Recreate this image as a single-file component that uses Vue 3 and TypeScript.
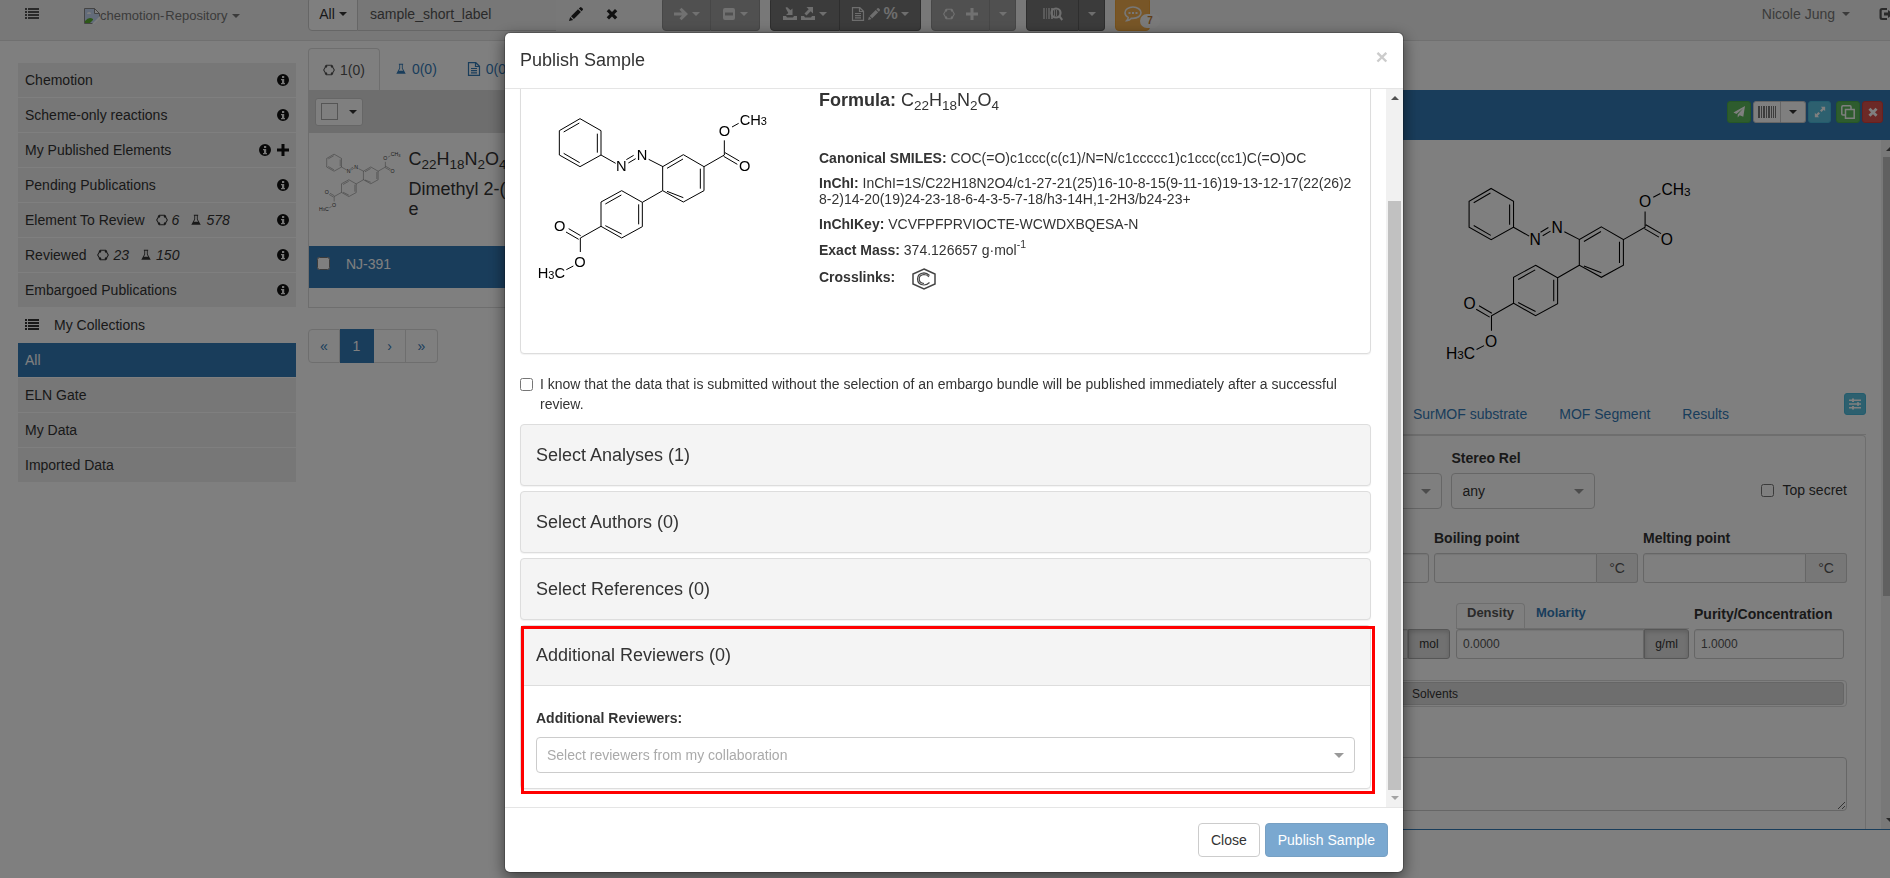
<script setup lang="ts">
import { ref } from 'vue'

interface Collection {
  name: string
  molecules?: number
  reactions?: number
  add?: boolean
}

const published: Collection[] = [
  { name: 'Chemotion' },
  { name: 'Scheme-only reactions' },
  { name: 'My Published Elements', add: true },
  { name: 'Pending Publications' },
  { name: 'Element To Review', molecules: 6, reactions: 578 },
  { name: 'Reviewed', molecules: 23, reactions: 150 },
  { name: 'Embargoed Publications' },
]
const collections: string[] = ['All', 'ELN Gate', 'My Data', 'Imported Data']
const activeCollection = ref('All')
const sections: string[] = ['Select Analyses (1)', 'Select Authors (0)', 'Select References (0)']
const segments: string[] = ['SurMOF substrate', 'MOF Segment', 'Results']
const embargoAccepted = ref(false)
const topSecret = ref(false)
const rowChecked = ref(false)
</script>

<template>
  <svg class="defs" aria-hidden="true">
    <symbol id="i-list" viewBox="0 0 14 14"><path d="M0 1h2v2H0zM3 1h11v2H3zM0 4h2v2H0zM3 4h11v2H3zM0 7h2v2H0zM3 7h11v2H3zM0 10h2v2H0zM3 10h11v2H3z" /></symbol>
    <symbol id="i-info" viewBox="0 0 14 14"><path fill-rule="evenodd" d="M7 1a6 6 0 1 0 0 12A6 6 0 0 0 7 1zM6 3h2.2v2H6zM5 6h3.2v4H9v1.3H5V10h1V7.3H5z" /></symbol>
    <symbol id="i-plus" viewBox="0 0 14 14"><path d="M5.5 1h3v4.5H13v3H8.5V13h-3V8.5H1v-3h4.5z" /></symbol>
    <symbol id="i-hex" viewBox="0 0 14 14"><path fill="none" stroke="currentColor" stroke-width="1.2" d="M4 1.5h6L13.2 7 10 12.500H4L.8 7z" /><path fill="none" stroke="currentColor" stroke-width="2.4" d="M2.800 3.800 4.300 2M11.200 3.800 9.700 2M2.800 10.200l1.500 1.800M11.200 10.200 9.700 12" /></symbol>
    <symbol id="i-flask" viewBox="0 0 14 14"><path fill-rule="evenodd" d="M4.500 1h5v1H9v4l3.500 6.500h-11L5 6V2h-.5zM6 2v4.300L4.500 9h5L8 6.300V2z" /></symbol>
    <symbol id="i-doc" viewBox="0 0 14 14"><path fill="none" stroke="currentColor" stroke-width="1.200" d="M1.500.7h7.300l3.700 3.600v9h-11zM8.500.8v3.700h4M4 6.500h6M4 8.700h6M4 10.900h6" /></symbol>
    <symbol id="i-pencil" viewBox="0 0 14 14"><path d="M0 14l1.200-4 2.900 2.900zM2 9.200 9 2.200l2.900 2.900-7 7zM9.800 1.500 11 .4q.8-.6 1.500 0l1.200 1.200q.6.800 0 1.500l-1.100 1.200z" /></symbol>
    <symbol id="i-remove" viewBox="0 0 14 14"><path d="M4 2l3 3 3-3 2.300 2.300L9.300 7.200l3 3L10 12.500l-3-3-3 3-2.300-2.300 3-3-3-2.900z" /></symbol>
    <symbol id="i-arrow" viewBox="0 0 14 14"><path d="M7.500.8 14 7l-6.500 6.200-2-2L8 8.600H0V5.400h8L5.500 2.800z" /></symbol>
    <symbol id="i-minus" viewBox="0 0 14 14"><path fill-rule="evenodd" d="M3 1h8q2 0 2 2v8q0 2-2 2H3q-2 0-2-2V3q0-2 2-2zM3 5.500v3h8v-3z" /></symbol>
    <symbol id="i-import" viewBox="0 0 14 14"><path d="M0 9h3l1 1.500h6L11 9h3v4H0zM2.500.8 4 0l3.500 3.300L9.500 1.500V8H3l2.300-2z" /></symbol>
    <symbol id="i-export" viewBox="0 0 14 14"><path d="M0 9h3l1 1.500h6L11 9h3v4H0zM5.500 0H12v6.500L9.700 4.300 5.500 8.500 3.500 6.500l4.200-4.200z" /></symbol>
    <symbol id="i-barcode" viewBox="0 0 18 14"><path d="M0 1h2v12H0zM3 1h1v12H3zM5 1h2v12H5zM8 1h1v12H8zM10 1h2v12h-2zM13 1h1v12h-1zM15 1h1v12h-1zM17 1h1v12h-1z" /></symbol>
    <symbol id="i-scan" viewBox="0 0 20 14"><path opacity=".6" d="M0 1h2v11H0zM3 1h1v11H3zM5 1h2v11H5z" /><circle cx="13" cy="6" r="4.500" fill="none" stroke="currentColor" stroke-width="2.200" /><path opacity=".8" d="M8 1h2v11H8zM11 3h1v6h-1zM13 3h1v6h-1z" /><path d="M15.500 9.800l1.500-1.500 3 4-1.500 1.500z" /></symbol>
    <symbol id="i-comment" viewBox="0 0 18 16"><path fill="none" stroke="currentColor" stroke-width="1.600" d="M9 1C4.500 1 1 3.500 1 6.800c0 2 1.300 3.600 3.200 4.600-.1 1.300-.6 2.300-1.400 3.200 2-.2 3.400-1 4.400-2.200H9c4.500 0 8-2.500 8-5.600S13.500 1 9 1z" /><path d="M4.500 6h2v2h-2zM8 6h2v2H8zM11.500 6h2v2h-2z" /></symbol>
    <symbol id="i-plane" viewBox="0 0 14 14"><path d="M14 0l-2 12.500-4.200-1.700L5.500 13.500V10L12 2.500 4 9.300.5 7.700z" /></symbol>
    <symbol id="i-expand" viewBox="0 0 14 14"><path d="M8 1h5v5l-1.600-1.600-2.600 2.600L7 5.200l2.600-2.600zM6 13H1V8l1.600 1.600L5.200 7 7 8.800l-2.600 2.600z" /></symbol>
    <symbol id="i-copy" viewBox="0 0 14 14"><path fill="none" stroke="currentColor" stroke-width="1.500" d="M4.500 4.500h8.700v8.700H4.500zM4.500 10H2Q.8 10 .8 9V2Q.8.8 2 .8h7Q10 .8 10 2v2.500" /></symbol>
    <symbol id="i-sliders" viewBox="0 0 14 14"><path d="M1 2.500h12V4H1zM1 6.300h12v1.500H1zM1 10h12v1.500H1zM4 1.500h2V5H4zM9 5.300h2v3.500H9zM4 9h2v3.500H4z" /></symbol>
    <symbol id="i-logout" viewBox="0 0 14 14"><path d="M8 1v2H3.500q-.8 0-.8.800v6.400q0 .8.800.8H8v2H3Q.5 13 .5 10.500v-7Q.5 1 3 1zM9 3l5 4-5 4V8.500H5v-3h4z" /></symbol>
    <symbol id="i-caret" viewBox="0 0 8 4"><path d="M0 0h8L4 4z" /></symbol>
    <symbol id="i-caret-up" viewBox="0 0 8 4"><path d="M0 4h8L4 0z" /></symbol>
    <symbol id="i-broken" viewBox="0 0 16 16"><path fill="#c6d9f5" stroke="#888" d="M.5.5h10l5 5v4l-6 6h-9z" /><path fill="#fff" stroke="#888" d="M10.500.5v5h5z" /><path fill="#fff" d="M3 6q0-2 2-2t2 2z" /><path fill="#5bb030" d="M1 15v-2q4-5 8-2v1l-3 3z" /><path fill="#fff" d="M8 16l8-8v2l-6 6z" /></symbol>
    <symbol id="i-pubchem" viewBox="0 0 24 22"><path fill="none" stroke="currentColor" stroke-width="1.500" d="M12 1l11 5v10l-11 5-11-5V6z" /><path fill="none" stroke="currentColor" stroke-width="1.200" d="M17.500 7.500Q15 4.800 12 4.800 5.500 5.500 5.500 11T12 17q3 0 5.500-2.500M17 9Q15 6.500 12 6.500 7.200 7 7.200 11T12 15.500" /></symbol>
    <symbol id="molecule" viewBox="100 320 720 540">
      <path fill="none" stroke="#000" stroke-width="3" d="M241 355l63 36v73l-63 35-62-35v-73zM239 368l-47 27M293 400v57M192 459l48 28M304 464l44 25M380 478l22-13M386 488l22-13M447 477l43 22M551 463l62 36v72l-62 34-62-34v-72zM550 476l-48 28M602 505v60M502 573l49 19M366 571l62 35v73l-62 34-62-35v-73zM365 584l-48 27M417 612v60M317 676l49 25M489 571l-61 35M613 499l61-35v-44M676 457l43 25M672 468l41 24M697 380l20-11M304 678l-62 35v42M243 706l-36-21M237 717l-38-22M200 808l21-11" />
      <g fill="#000" font-family="'Liberation Sans', Arial, sans-serif" font-size="44">
        <text x="349" y="513">N</text><text x="411" y="479">N</text>
        <text x="657" y="408">O</text><text x="718" y="513">O</text>
        <text x="720" y="373">CH<tspan font-size="33" dy="2">3</tspan></text>
        <text x="163" y="693">O</text><text x="224" y="801">O</text>
        <text x="114" y="834">H<tspan font-size="33" dy="2">3</tspan><tspan dy="-2">C</tspan></text>
      </g>
    </symbol>
  </svg>

  <div class="page">
    <header class="navbar">
      <button class="plain menu" aria-label="Toggle tree"><svg class="ic"><use href="#i-list" /></svg></button>
      <a class="brand" href="#"><svg class="ic16"><use href="#i-broken" /></svg>chemotion-<span class="repo">Repository</span><svg class="caret"><use href="#i-caret" /></svg></a>
      <div class="search">
        <button class="search-all">All <svg class="caret"><use href="#i-caret" /></svg></button>
        <input type="text" value="sample_short_label" aria-label="Search" />
        <button class="plain" aria-label="Structure editor"><svg class="ic"><use href="#i-pencil" /></svg></button>
        <button class="plain" aria-label="Clear search"><svg class="ic"><use href="#i-remove" /></svg></button>
      </div>
      <div class="group off">
        <button class="w49" aria-label="Move"><svg class="ic"><use href="#i-arrow" /></svg><svg class="caret"><use href="#i-caret" /></svg></button>
        <button class="w49" aria-label="Remove"><svg class="ic"><use href="#i-minus" /></svg><svg class="caret"><use href="#i-caret" /></svg></button>
      </div>
      <div class="group">
        <button class="w70" aria-label="Import and export"><svg class="ic"><use href="#i-import" /></svg><svg class="ic"><use href="#i-export" /></svg><svg class="caret"><use href="#i-caret" /></svg></button>
        <button class="w81"><svg class="ic"><use href="#i-doc" /></svg><svg class="ic12"><use href="#i-pencil" /></svg><b>%</b><svg class="caret"><use href="#i-caret" /></svg></button>
      </div>
      <div class="group off">
        <button class="w59" aria-label="New sample"><svg class="ic12"><use href="#i-hex" /></svg><svg class="ic"><use href="#i-plus" /></svg></button>
        <button class="w26" aria-label="More elements"><svg class="caret"><use href="#i-caret" /></svg></button>
      </div>
      <div class="group">
        <button class="w53" aria-label="Scan code"><svg class="ic20"><use href="#i-scan" /></svg></button>
        <button class="w26" aria-label="More scan options"><svg class="caret"><use href="#i-caret" /></svg></button>
      </div>
      <button class="inbox" aria-label="Messages"><svg class="ic18"><use href="#i-comment" /></svg><span class="badge">7</span></button>
      <a class="user" href="#">Nicole Jung <svg class="caret"><use href="#i-caret" /></svg></a>
      <button class="plain logout" aria-label="Log out"><svg class="ic"><use href="#i-logout" /></svg></button>
    </header>

    <div class="columns">
      <nav class="sidebar">
        <a v-for="c in published" :key="c.name" class="node" href="#">
          <span>{{ c.name }}</span>
          <i v-if="c.molecules" class="count"><svg class="ic12"><use href="#i-hex" /></svg>{{ c.molecules }}</i>
          <i v-if="c.reactions" class="count"><svg class="ic12"><use href="#i-flask" /></svg>{{ c.reactions }}</i>
          <span class="tools"><svg class="ic"><use href="#i-info" /></svg><svg v-if="c.add" class="ic"><use href="#i-plus" /></svg></span>
        </a>
        <a class="node own" href="#"><svg class="ic"><use href="#i-list" /></svg><span>My Collections</span></a>
        <a v-for="name in collections" :key="name" class="node" :class="{ active: name === activeCollection }" href="#" @click.prevent="activeCollection = name">{{ name }}</a>
      </nav>

      <main class="list">
        <div class="tabs">
          <a class="tab on" href="#"><svg class="ic12"><use href="#i-hex" /></svg>1(0)</a>
          <a class="tab" href="#"><svg class="ic12"><use href="#i-flask" /></svg>0(0)</a>
          <a class="tab" href="#"><svg class="ic"><use href="#i-doc" /></svg>0(0)</a>
        </div>
        <table class="elements">
          <thead>
            <tr><th colspan="2"><button class="pick" aria-label="Select elements"><span class="box"></span><svg class="caret"><use href="#i-caret" /></svg></button></th></tr>
          </thead>
          <tbody>
            <tr class="molrow">
              <td class="thumb"><svg><use href="#molecule" /></svg></td>
              <td><p class="formula">C<sub>22</sub>H<sub>18</sub>N<sub>2</sub>O<sub>4</sub></p><p>Dimethyl 2-(<br />e</p></td>
            </tr>
            <tr class="sample"><td colspan="2"><label><input v-model="rowChecked" type="checkbox" />NJ-391</label></td></tr>
            <tr class="tail"><td colspan="2"></td></tr>
          </tbody>
        </table>
        <div class="pages">
          <a href="#">«</a><a class="on" href="#">1</a><a href="#">›</a><a href="#">»</a>
        </div>
      </main>

      <section class="detail">
        <div class="detail-head">
          <button class="xs green" aria-label="Publish"><svg class="ic12"><use href="#i-plane" /></svg></button>
          <span class="pair"><button class="xs code" aria-label="Print code"><svg class="ic18"><use href="#i-barcode" /></svg></button><button class="xs more" aria-label="Code options"><svg class="caret"><use href="#i-caret" /></svg></button></span>
          <button class="xs teal" aria-label="Full size"><svg class="ic12"><use href="#i-expand" /></svg></button>
          <button class="xs green copy" aria-label="Copy"><svg class="ic"><use href="#i-copy" /></svg></button>
          <button class="xs red" aria-label="Close sample"><svg class="ic12"><use href="#i-remove" /></svg></button>
        </div>
        <div class="detail-main">
          <div class="detail-body">
            <svg class="structure"><use href="#molecule" /></svg>
            <div class="segments">
              <a v-for="s in segments" :key="s" href="#">{{ s }}</a>
              <button class="xs teal" aria-label="Tab layout"><svg class="ic"><use href="#i-sliders" /></svg></button>
            </div>
            <form class="form" @submit.prevent>
              <div class="frow stereo">
                <span class="pickbox abs"><select aria-label="Stereo Abs"><option></option></select><svg class="arrow"><use href="#i-caret" /></svg></span>
                <div class="rel"><label for="rel">Stereo Rel</label><span class="pickbox"><select id="rel"><option>any</option></select><svg class="arrow"><use href="#i-caret" /></svg></span></div>
                <label class="secret"><input v-model="topSecret" type="checkbox" />Top secret</label>
              </div>
              <div class="frow">
                <input class="lead" type="text" aria-label="Location" />
                <div class="temp"><label for="bp">Boiling point</label><div class="addon"><input id="bp" type="text" /><span>°C</span></div></div>
                <div class="temp"><label for="mp">Melting point</label><div class="addon"><input id="mp" type="text" /><span>°C</span></div></div>
              </div>
              <div class="frow small">
                <div class="addon lead"><input type="text" aria-label="Amount" /><button class="unit mol">mol</button></div>
                <div class="density">
                  <div class="minitabs"><a class="on" href="#">Density</a><a href="#">Molarity</a></div>
                  <div class="addon"><input type="text" value="0.0000" aria-label="Density" /><button class="unit">g/ml</button></div>
                </div>
                <div class="purity"><label for="pur">Purity/Concentration</label><input id="pur" type="text" value="1.0000" /></div>
              </div>
              <div class="solvents"><button>Solvents</button></div>
              <textarea aria-label="Description"></textarea>
            </form>
          </div>
          <div class="track"><svg class="caret"><use href="#i-caret-up" /></svg><span class="thumb-a"></span><span class="rest"></span><svg class="caret"><use href="#i-caret" /></svg></div>
        </div>
      </section>
    </div>
  </div>

  <div class="overlay">
    <div class="modal" role="dialog" aria-labelledby="modal-title">
      <div class="modal-head"><h4 id="modal-title">Publish Sample</h4><button class="x" aria-label="Dismiss">×</button></div>
      <div class="modal-mid">
        <div class="modal-body">
          <div class="card summary">
            <svg class="drawing"><use href="#molecule" /></svg>
            <div class="facts">
              <p class="big"><b>Formula:</b> C<sub>22</sub>H<sub>18</sub>N<sub>2</sub>O<sub>4</sub></p>
              <p><b>Canonical SMILES:</b> COC(=O)c1ccc(c(c1)/N=N/c1ccccc1)c1ccc(cc1)C(=O)OC</p>
              <p><b>InChI:</b> InChI=1S/C22H18N2O4/c1-27-21(25)16-10-8-15(9-11-16)19-13-12-17(22(26)28-2)14-20(19)24-23-18-6-4-3-5-7-18/h3-14H,1-2H3/b24-23+</p>
              <p><b>InChIKey:</b> VCVFPFPRVIOCTE-WCWDXBQESA-N</p>
              <p class="mass"><b>Exact Mass:</b> 374.126657 g·mol<sup>-1</sup></p>
              <p class="cross"><b>Crosslinks:</b><a href="#" aria-label="PubChem"><svg><use href="#i-pubchem" /></svg></a></p>
            </div>
          </div>
          <label class="agree"><input v-model="embargoAccepted" type="checkbox" /><span>I know that the data that is submitted without the selection of an embargo bundle will be published immediately after a successful review.</span></label>
          <button v-for="s in sections" :key="s" class="card section">{{ s }}</button>
          <div class="card reviewers">
            <h4>Additional Reviewers (0)</h4>
            <div class="reviewers-body">
              <label for="reviewers">Additional Reviewers:</label>
              <span class="pickbox"><select id="reviewers" class="empty"><option>Select reviewers from my collaboration</option></select><svg class="arrow"><use href="#i-caret" /></svg></span>
            </div>
            <div class="mark"></div>
          </div>
        </div>
        <div class="track modal-track"><svg class="caret"><use href="#i-caret-up" /></svg><span class="gap"></span><span class="thumb-b"></span><svg class="caret end"><use href="#i-caret" /></svg></div>
      </div>
      <div class="modal-foot"><button class="btn">Close</button><button class="btn primary" disabled>Publish Sample</button></div>
    </div>
  </div>
</template>

<style>
html, body { height: 100%; overflow: hidden; background: #fff; }
</style>

<style scoped>
* { box-sizing: border-box; }
.page, .overlay { font: 14px/20px 'Liberation Sans', Arial, Helvetica, sans-serif; color: #333; }
button, input, select, textarea { font: inherit; color: inherit; margin: 0; }
button { padding: 0; cursor: pointer; }
a { color: #337ab7; text-decoration: none; }
p, h4 { margin: 0; font-weight: 400; }
label { font-weight: 700; }
svg { fill: currentColor; flex: none; }
sub, sup { font-size: 75%; line-height: 0; position: relative; vertical-align: baseline; }
sub { bottom: -4px; }
sup { top: -7px; }
.defs { position: absolute; width: 0; height: 0; }
.ic { width: 14px; height: 14px; }
.ic12 { width: 12px; height: 12px; }
.ic16 { width: 16px; height: 16px; }
.ic18 { width: 18px; height: 16px; }
.ic20 { width: 20px; height: 14px; }
.caret { width: 8px; height: 4px; }

.page { width: calc(100% + 18px); margin-top: -10px; }
.navbar { display: flex; align-items: flex-start; height: 51px; padding-top: 7px; background: #f0f0f0; border-bottom: 1px solid #e0e0e0; }
.plain { display: flex; align-items: center; justify-content: center; height: 34px; border: 0; background: none; color: #222; }
.menu { width: 14px; margin-left: 25px; color: #555; }
.brand { display: flex; align-items: center; width: 224px; height: 38px; margin-left: 45px; font-size: 13px; color: #777; }
.repo { margin: 0 5px 0 1px; }
.search { display: flex; width: 354px; }
.search-all { display: flex; align-items: center; justify-content: center; gap: 4px; width: 50px; height: 34px; border: 1px solid #ccc; border-radius: 4px 0 0 4px; background: #fff; }
.search input { width: 198px; height: 34px; padding: 0 12px; border: 1px solid #ccc; border-left: 0; border-right: 0; background: #eee; color: #555; }
.search .plain { width: 36px; margin-left: 2px; }
.search .plain + .plain { margin-left: 0; }
.group { display: flex; margin-right: 10px; }
.group.off { opacity: .65; }
.group button { display: flex; align-items: center; justify-content: center; gap: 4px; height: 34px; border: 1px solid #5c5c5c; background: #777; color: #ddd; }
.group button + button { border-left: 0; }
.group button:first-child { border-radius: 4px 0 0 4px; }
.group button:last-child { border-radius: 0 4px 4px 0; }
.w49 { width: 49px; }
.w70 { width: 70px; }
.group .w81 { width: 81px; gap: 3px; }
.w59 { width: 59px; }
.w59 .ic { margin-left: 6px; }
.w26 { width: 26px; }
.w53 { width: 53px; }
.group b { font-size: 16px; }
.inbox { position: relative; display: flex; align-items: center; justify-content: center; width: 35px; height: 34px; border: 1px solid #eea236; border-radius: 4px; background: #f0ad4e; color: #eee; }
.badge { position: absolute; left: 24px; top: 16px; width: 20px; height: 14px; border-radius: 8px; background: #f5f5f5; color: #c07a30; font-size: 10px; line-height: 14px; font-weight: 700; }
.user { display: flex; align-items: center; gap: 7px; height: 34px; margin-left: auto; color: #777; }
.logout { margin: 0 15px 0 29px; color: #555; }

.columns { display: flex; align-items: flex-start; }
.sidebar { display: flex; flex-direction: column; gap: 1px; width: 278px; margin: 22px 12px 0 18px; }
.node { display: flex; align-items: center; height: 34px; padding: 0 6px 0 7px; background: #eee; color: #333; }
.node.own { background: none; gap: 15px; }
.node.active { background: #337ab7; color: #fff; }
.count { display: flex; align-items: center; gap: 4px; margin-left: 11px; }
.tools { display: flex; gap: 4px; margin-left: auto; color: #111; }

.list { width: 650px; padding-top: 7px; }
.tabs { display: flex; height: 42px; }
.tab { display: flex; align-items: center; gap: 5px; height: 42px; padding: 0 14px; border: 1px solid transparent; }
.tab.on { border-color: #ddd; border-bottom: 0; border-radius: 4px 4px 0 0; color: #555; }
.elements { width: 100%; border-collapse: collapse; border: 1px solid #ddd; }
.elements th { height: 42px; padding: 0 6px; background: #dcdcdc; text-align: left; }
.elements td { padding: 0; vertical-align: top; }
.pick { display: flex; align-items: center; justify-content: space-around; width: 48px; height: 28px; border: 1px solid #ccc; border-radius: 3px; background: #fff; }
.box { width: 17px; height: 17px; border: 1px solid #aaa; }
.molrow { height: 113px; font-size: 18px; line-height: 20px; }
.thumb { width: 100px; }
.thumb svg { width: 86px; height: 64px; margin: 17px 0 0 8px; opacity: .8; }
.molrow .formula { margin: 16px 0 10px; }
.sample { height: 42px; background: #337ab7; color: #fff; }
.sample label { display: flex; align-items: center; gap: 16px; height: 36px; padding-left: 8px; font-weight: 400; }
.sample input { width: 13px; height: 13px; }
.tail { height: 20px; }
.pages { display: flex; margin-top: 21px; }
.pages a { display: flex; align-items: center; justify-content: center; width: 32px; height: 34px; border: 1px solid #ddd; border-left: 0; }
.pages a:first-child { border-left: 1px solid #ddd; border-radius: 4px 0 0 4px; }
.pages a:last-child { border-radius: 0 4px 4px 0; }
.pages .on { width: 34px; border-color: #337ab7; background: #337ab7; color: #fff; }

.detail { display: flex; flex-direction: column; flex: 1; height: calc(100vh - 138px); margin: 49px 9px 0 0; border: 1px solid #337ab7; border-top: 0; }
.detail-head { display: flex; align-items: center; justify-content: flex-end; gap: 2px; height: 50px; padding: 0 15px 6px 0; background: #337ab7; }
.xs { display: flex; align-items: center; justify-content: center; width: 23px; height: 22px; border: 1px solid #4cae4c; border-radius: 3px; background: #5cb85c; color: #fff; }
.xs.teal { border-color: #46b8da; background: #5bc0de; }
.xs.red { width: 21px; border-color: #d43f3a; background: #d9534f; }
.xs.green { width: 24px; }
.xs.copy { margin-left: 3px; }
.pair { display: flex; }
.pair .xs { border-color: #ccc; background: #fff; color: #333; }
.xs.code { width: 28px; border-radius: 3px 0 0 3px; }
.xs.code .ic18 { opacity: .65; }
.xs.more { width: 25px; border-left: 0; border-radius: 0 3px 3px 0; }
.detail-main { display: flex; flex: 1; min-height: 0; }
.detail-body { display: flex; flex-direction: column; flex: 1; overflow: hidden; padding: 36px 15px 0; }
.structure { align-self: flex-end; width: 256px; height: 192px; margin-right: 169px; }
.segments { display: flex; justify-content: flex-end; align-items: flex-start; height: 42px; margin-top: 25px; border-bottom: 1px solid #ddd; }
.segments a { height: 41px; padding: 11px 16px 10px; line-height: 20px; }
.segments .xs { width: 22px; margin-left: 99px; }
.form { flex: 1; display: flex; flex-direction: column; padding: 12px 18px 0; border: 1px solid #ddd; border-bottom: 0; border-radius: 0 4px 0 0; }
.form label { display: block; margin-bottom: 5px; }
.frow { display: flex; justify-content: flex-end; align-items: flex-end; gap: 5px; margin-bottom: 20px; }
.frow.stereo { gap: 9px; margin-bottom: 19px; }
.pickbox { position: relative; display: block; }
.pickbox select { appearance: none; width: 100%; height: 36px; padding: 0 10px; border: 1px solid #ccc; border-radius: 4px; background: #fff; display: block; }
.pickbox select.empty { color: #aaa; }
.arrow { position: absolute; right: 11px; top: 16px; width: 10px; height: 5px; color: #999; }
.abs { width: 144px; }
.rel { width: 144px; }
.form .secret { display: flex; align-items: center; gap: 8px; height: 36px; margin: 0 0 1px 157px; font-weight: 400; }
.secret input, .agree input { width: 13px; height: 13px; }
.frow input[type='text'] { flex: 1; min-width: 0; height: 30px; padding: 0 6px; border: 1px solid #ccc; border-radius: 3px; background: #fff; color: #555; box-shadow: inset 0 1px 1px rgba(0, 0, 0, .08); }
.frow .lead { flex: 1; }
.temp { width: 204px; }
.addon { display: flex; }
.frow .addon input[type='text'] { border-radius: 3px 0 0 3px; }
.addon span, .unit { display: flex; align-items: center; justify-content: center; width: 41px; height: 30px; border: 1px solid #ccc; border-left: 0; border-radius: 0 3px 3px 0; background: #eee; color: #555; }
.frow.small { padding-right: 3px; margin-bottom: 21px; }
.small input, .small .unit { font-size: 12px; }
.small .unit { width: 45px; border: 1px solid #adadad; background: #e2e2e2; color: #333; box-shadow: inset 0 2px 4px rgba(0, 0, 0, .15); }
.small .mol { width: 42px; }
.density { width: 233px; margin-left: 1px; }
.minitabs { display: flex; border-bottom: 1px solid #ddd; font-size: 13px; font-weight: 700; }
.minitabs a { height: 25px; padding: 0 10px; line-height: 18px; border: 1px solid transparent; border-bottom: 0; }
.minitabs .on { border-color: #ddd; border-radius: 4px 4px 0 0; color: #555; }
.purity { width: 150px; }
.purity label { white-space: nowrap; }
.frow .purity input { width: 100%; display: block; }
.solvents { height: 27px; padding: 1px 2px; border: 1px solid #ddd; border-radius: 4px; }
.solvents button { width: 100%; height: 23px; padding-left: 30px; border: 1px solid #ccc; border-radius: 3px; background: #dcdcdc; font-size: 12px; }
.form textarea { width: 100%; height: 54px; margin-top: 50px; border: 1px solid #ccc; border-radius: 4px; background: #fff; }
.track { display: flex; flex-direction: column; align-items: center; width: 17px; padding: 7px 0; background: #f1f1f1; color: #505050; }
.thumb-a { width: 13px; height: 439px; margin-top: 6px; background: #c1c1c1; }
.rest { flex: 1; }

.overlay { position: fixed; inset: 0 -18px 0 0; display: flex; justify-content: center; align-items: flex-start; padding-top: 32px; background: rgba(0, 0, 0, .5); }
.modal { display: flex; flex-direction: column; width: 900px; height: calc(100vh - 37px); border: 1px solid rgba(0, 0, 0, .2); border-radius: 6px; background: #fff; background-clip: padding-box; box-shadow: 0 5px 15px rgba(0, 0, 0, .5); }
.modal-head { display: flex; justify-content: space-between; height: 56px; padding: 15px; border-bottom: 1px solid #e5e5e5; }
.modal-head h4 { font-size: 18px; line-height: 24px; }
.x { height: 18px; border: 0; background: none; color: #ccc; font-size: 21px; line-height: 18px; font-weight: 700; }
.modal-mid { display: flex; flex: 1; min-height: 0; }
.modal-body { display: flex; flex-direction: column; justify-content: flex-end; flex: 1; overflow: hidden; padding: 0 15px 18px; }
.card { flex: none; border: 1px solid #ddd; border-radius: 4px; background: #fff; box-shadow: 0 1px 1px rgba(0, 0, 0, .05); }
.summary { display: flex; padding: 40px 16px 63px 12px; }
.drawing { width: 240px; height: 180px; margin: 19px 46px 0 0; }
.facts { flex: 1; line-height: 16px; word-break: break-all; }
.facts p { margin-bottom: 9px; }
.facts .big { margin-bottom: 38px; font-size: 18px; line-height: 24px; }
.facts .mass { margin-top: 10px; }
.facts .cross { display: flex; height: 22px; margin: 10px 0 0; line-height: 18px; }
.cross a { margin-left: 17px; color: #444; }
.cross svg { width: 24px; height: 22px; }
.agree { display: flex; align-items: flex-start; gap: 7px; margin: 20px 0 10px; font-weight: 400; }
.agree input { flex: none; margin-top: 4px; }
.section { width: 100%; height: 62px; margin-bottom: 5px; padding: 0 15px; background: #f4f4f4; text-align: left; font-size: 18px; line-height: 24px; }
.reviewers { position: relative; }
.reviewers h4 { height: 60px; padding: 17px 15px; border-bottom: 1px solid #ddd; background: #f4f4f4; font-size: 18px; line-height: 24px; }
.reviewers-body { padding: 22px 15px 15px; }
.reviewers-body label { display: block; margin-bottom: 9px; }
.mark { position: absolute; inset: 0 -5px -6px 0; border: 3px solid #f00; pointer-events: none; }
.gap { height: 101px; flex: none; }
.thumb-b { flex: 1; width: 13px; background: #c1c1c1; }
.end { margin-top: 6px; color: #a3a3a3; }
.modal-foot { display: flex; justify-content: flex-end; gap: 5px; padding: 15px; border-top: 1px solid #e5e5e5; }
.btn { height: 34px; padding: 0 12px; border: 1px solid #ccc; border-radius: 4px; background: #fff; }
.btn.primary { border-color: #2e6da4; background: #337ab7; color: #fff; opacity: .65; }
</style>
